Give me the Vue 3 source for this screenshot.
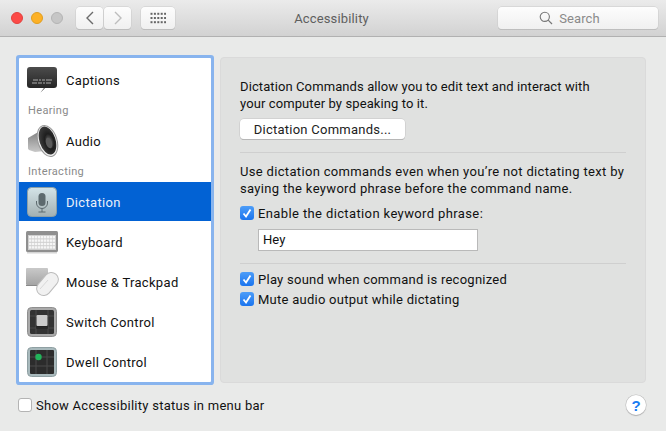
<template>
  <div class="window">
    <header class="titlebar">
      <div class="lights">
        <span class="light red"></span>
        <span class="light yellow"></span>
        <span class="light off"></span>
      </div>
      <div class="nav">
        <button class="tool nav-btn">
          <svg width="10" height="16" viewBox="0 0 10 16"><path d="M8 2 2 8l6 6" fill="none" stroke="#6b6b6b" stroke-width="1.4" /></svg>
        </button>
        <button class="tool nav-btn">
          <svg width="10" height="16" viewBox="0 0 10 16"><path d="m2 2 6 6-6 6" fill="none" stroke="#bdbdbd" stroke-width="1.4" /></svg>
        </button>
      </div>
      <button class="tool grid-btn">
        <svg width="16" height="12" viewBox="0 0 16 12">
          <g fill="#666">
            <rect v-for="d in gridDots" :key="d.k" :x="d.x" :y="d.y" width="2" height="2" />
          </g>
        </svg>
      </button>
      <div class="title">Accessibility</div>
      <div class="tool search">
        <svg width="14" height="14" viewBox="0 0 14 14"><circle cx="5.800" cy="5.800" r="4.600" fill="none" stroke="#777" stroke-width="1.100" /><path d="m9.200 9.200 3.800 3.800" stroke="#777" stroke-width="1.200" /></svg>
        <span>Search</span>
      </div>
    </header>

    <main class="content">
      <nav class="list">
        <div class="row">
          <svg class="icon" width="30" height="26" viewBox="0 0 30 26">
            <defs>
              <linearGradient id="bubble" x1="0" y1="0" x2="0" y2="1"><stop offset="0" stop-color="#4c4c4c" /><stop offset="1" stop-color="#1d1d1d" /></linearGradient>
            </defs>
            <path d="M3 0h24a3 3 0 0 1 3 3v15a3 3 0 0 1-3 3h-9l-4.500 4.500L17 21H3a3 3 0 0 1-3-3V3a3 3 0 0 1 3-3z" fill="url(#bubble)" />
            <path d="M6 13h5m1 0h2m1 0h3m1 0h6M5 16h5m1 0h4m1 0h2m1 0h5" stroke="#ccc" stroke-width="0.800" />
          </svg>
          <span>Captions</span>
        </div>
        <div class="group">Hearing</div>
        <div class="row">
          <svg class="icon" width="32" height="34" viewBox="0 0 32 34">
            <defs>
              <radialGradient id="cone" cx="0.600" cy="0.550" r="0.600"><stop offset="0" stop-color="#6f6f6f" /><stop offset="0.450" stop-color="#1e1e1e" /><stop offset="1" stop-color="#3d3d3d" /></radialGradient>
              <linearGradient id="shell" x1="0" y1="0" x2="0" y2="1"><stop offset="0" stop-color="#808080" /><stop offset="1" stop-color="#c8c8c8" /></linearGradient>
            </defs>
            <path d="M1 14 13 7l5 20-10 1-6-2a3 3 0 0 1-1-3z" fill="url(#shell)" />
            <ellipse cx="20.500" cy="17" rx="9.500" ry="16" transform="rotate(-18 20.500 17)" fill="#eee" stroke="#999" stroke-width="1" />
            <ellipse cx="20.500" cy="16.500" rx="8" ry="14.500" transform="rotate(-18 20.500 16.500)" fill="url(#cone)" />
            <ellipse cx="22" cy="19" rx="3" ry="5.500" transform="rotate(-18 22 19)" fill="#5a5a5a" />
          </svg>
          <span>Audio</span>
        </div>
        <div class="group">Interacting</div>
        <div class="row selected">
          <svg class="icon" width="30" height="30" viewBox="0 0 30 30">
            <defs>
              <linearGradient id="micbg" x1="0" y1="0" x2="0" y2="1"><stop offset="0" stop-color="#d4e4e8" /><stop offset="1" stop-color="#a3b0b2" /></linearGradient>
            </defs>
            <rect x="0.500" y="0.500" width="29" height="29" rx="4" fill="url(#micbg)" stroke="#8da0a6" />
            <rect x="11.500" y="6" width="7" height="13" rx="3.500" fill="#5d6a6e" />
            <path d="M9.500 14v2a5.500 5.500 0 0 0 11 0v-2M15 21.500V25m-3.500 0h7" fill="none" stroke="#5d6a6e" stroke-width="1" />
          </svg>
          <span>Dictation</span>
        </div>
        <div class="row">
          <svg class="icon wide" width="32" height="24" viewBox="0 0 32 24">
            <rect x="0" y="1" width="32" height="21" rx="1.500" fill="#8f8f8f" />
            <rect x="2" y="5" width="28" height="15" fill="#cfcfcf" />
            <g fill="#f6f6f6">
              <rect v-for="k in keyRects" :key="k.k" :x="k.x" :y="k.y" :width="k.w" height="2.400" />
            </g>
            <rect x="1" y="22" width="30" height="1.500" fill="#d4d4d4" />
          </svg>
          <span>Keyboard</span>
        </div>
        <div class="row">
          <svg class="icon wide" width="33" height="30" viewBox="0 0 33 30">
            <defs>
              <linearGradient id="pad" x1="0" y1="0" x2="0" y2="1"><stop offset="0" stop-color="#c9c9c9" /><stop offset="1" stop-color="#a4a4a4" /></linearGradient>
            </defs>
            <rect x="0" y="1" width="22" height="17" rx="1" fill="url(#pad)" />
            <path d="M0 18h22v1H0z" fill="#888" />
            <rect x="14.500" y="4" width="14" height="26" rx="7" transform="rotate(40 21.500 17)" fill="#f1f1f1" stroke="#bbb" stroke-width="1" />
            <path d="M14 22l8-9" stroke="#d8d8d8" stroke-width="1" />
          </svg>
          <span>Mouse &amp; Trackpad</span>
        </div>
        <div class="row">
          <svg class="icon" width="30" height="30" viewBox="0 0 30 30">
            <rect x="0.500" y="0.500" width="29" height="29" rx="4" fill="#a9a9a9" stroke="#8f8f8f" />
            <rect x="3" y="3" width="24" height="24" rx="1.500" fill="#333" />
            <path d="M3 9h24M3 21h24M9 3v24M21 3v24" stroke="#4b4b4b" stroke-width="1" />
            <rect x="9" y="10" width="12" height="12" rx="1" fill="#111" opacity="0.500" />
            <rect x="9.500" y="8" width="11" height="11" rx="1" fill="#cbcbcb" />
          </svg>
          <span>Switch Control</span>
        </div>
        <div class="row">
          <svg class="icon" width="30" height="30" viewBox="0 0 30 30">
            <rect x="0.500" y="0.500" width="29" height="29" rx="4" fill="#a8b9bc" stroke="#8fa0a3" />
            <rect x="3" y="3" width="24" height="24" rx="1" fill="#2c2c2c" />
            <path d="M3 10h24M3 19h24M9 3v24M20 3v24" stroke="#4a4a4a" stroke-width="1" />
            <circle cx="11.500" cy="10" r="3.200" fill="#22b45a" />
          </svg>
          <span>Dwell Control</span>
        </div>
      </nav>

      <section class="panel">
        <p class="text">Dictation Commands allow you to edit text and interact with<br />your computer by speaking to it.</p>
        <button class="push">Dictation Commands...</button>
        <hr class="sep" />
        <p class="text loose">Use dictation commands even when you’re not dictating text by<br />saying the keyword phrase before the command name.</p>
        <label class="check first">
          <span class="box on"><svg width="10" height="10" viewBox="0 0 10 10"><path d="M1.500 5.500 4 8.500 8.500 1.500" fill="none" stroke="#fff" stroke-width="1.800" /></svg></span>
          Enable the dictation keyword phrase:
        </label>
        <div class="field">Hey</div>
        <hr class="sep lower" />
        <label class="check">
          <span class="box on"><svg width="10" height="10" viewBox="0 0 10 10"><path d="M1.500 5.500 4 8.500 8.500 1.500" fill="none" stroke="#fff" stroke-width="1.800" /></svg></span>
          Play sound when command is recognized
        </label>
        <label class="check">
          <span class="box on"><svg width="10" height="10" viewBox="0 0 10 10"><path d="M1.500 5.500 4 8.500 8.500 1.500" fill="none" stroke="#fff" stroke-width="1.800" /></svg></span>
          Mute audio output while dictating
        </label>
      </section>
    </main>

    <footer class="footer">
      <label class="check">
        <span class="box"></span>
        Show Accessibility status in menu bar
      </label>
      <button class="help">?</button>
    </footer>
  </div>
</template>

<script setup>
const gridDots = [];
for (let r = 0; r < 3; r++) {
  for (let c = 0; c < 5; c++) {
    gridDots.push({ k: r + "-" + c, x: c * 3.4 + 0.5, y: r * 4.2 + 0.8 });
  }
}

const keyRects = [];
for (let r = 0; r < 4; r++) {
  for (let c = 0; c < 9; c++) {
    keyRects.push({ k: r + "-" + c, x: 3 + c * 2.95, y: 6 + r * 3.4, w: 2.4 });
  }
}
</script>

<style>
html,
body {
  margin: 0;
  background: #e9eae9;
}
</style>

<style scoped>
.window {
  width: 666px;
  height: 431px;
  overflow: hidden;
  background: #e9eae9;
  font-family: Roboto, "Liberation Sans", sans-serif;
  font-size: 13px;
  letter-spacing: 0.1px;
  color: #111;
}

.titlebar {
  height: 36px;
  display: flex;
  align-items: center;
  padding: 0 8px 0 11px;
  background: linear-gradient(#ebebeb, #d2d2d2);
  border-bottom: 1px solid #b1b1b1;
}

.lights {
  display: flex;
  gap: 8px;
  width: 65px;
}

.light {
  width: 12px;
  height: 12px;
  border-radius: 50%;
  box-sizing: border-box;
}

.red {
  background: #fc4a47;
  border: 1px solid #e2413e;
}

.yellow {
  background: #fdb126;
  border: 1px solid #e09e20;
}

.off {
  background: #c6c6c6;
  border: 1px solid #b4b4b4;
}

.tool {
  height: 22px;
  box-sizing: border-box;
  padding: 0;
  display: flex;
  align-items: center;
  justify-content: center;
  background: linear-gradient(#fdfdfd, #f0f0f0);
  border: 0;
  border-radius: 4px;
  box-shadow: 0 0 0 0.5px #c9c9c9, 0 1px 0 #b3b3b3;
}

.nav {
  display: flex;
  gap: 1px;
}

.nav-btn {
  width: 27px;
}

.grid-btn {
  width: 34px;
  margin-left: 10px;
}

.title {
  flex: 1;
  text-align: center;
  color: #5e5e5e;
  padding-right: 10px;
  letter-spacing: 0.15px;
}

.search {
  width: 160px;
  gap: 6px;
  color: #8a8a8a;
  padding-right: 17px;
}

.content {
  display: flex;
  gap: 9px;
  padding: 20px 20px 0 19px;
}

.list {
  width: 192px;
  height: 324px;
  margin-top: 1px;
  background: #fff;
  border-radius: 1px;
  box-shadow: 0 0 0 3px #88b4ee;
  flex: none;
}

.row {
  height: 40px;
  display: flex;
  align-items: center;
  position: relative;
  padding-left: 47px;
  letter-spacing: 0.32px;
}

.row:first-child {
  margin-top: 2px;
}

.icon {
  position: absolute;
  left: 8px;
  top: 50%;
  transform: translateY(-50%);
}

.icon.wide {
  left: 7px;
}

.selected {
  background: #0262d4;
  color: #e9f0fa;
  height: 39px;
  margin-bottom: 1px;
  padding-top: 1px;
  box-sizing: border-box;
}

.group {
  height: 21px;
  line-height: 21px;
  padding-left: 9px;
  font-size: 11px;
  letter-spacing: 0.35px;
  color: #8a8a8a;
}

.panel {
  flex: 1;
  height: 326px;
  box-sizing: border-box;
  padding: 20px 19px 0;
  background: #e0e1e0;
  border: 1px solid #dadada;
  border-radius: 4px;
}

.text {
  margin: 0;
  line-height: 17px;
  white-space: nowrap;
}

.text.loose {
  letter-spacing: 0.33px;
}

.push {
  display: block;
  width: 165px;
  height: 20px;
  margin-top: 7px;
  padding: 0;
  background: #fff;
  border: 0;
  border-radius: 4px;
  box-shadow: 0 0 0 0.5px #c4c4c4, 0 1px 0 #aaa;
  font: inherit;
  letter-spacing: 0.25px;
  color: #222;
}

.sep {
  margin: 13px 0 10px;
  border: 0;
  border-top: 1px solid #cfcfcf;
}

.sep.lower {
  margin: 12px 0 5px;
}

.check {
  display: flex;
  align-items: center;
  gap: 4px;
  height: 20px;
  letter-spacing: 0.26px;
}

.first {
  margin-top: 6px;
  letter-spacing: 0.38px;
}

.box {
  width: 14px;
  height: 14px;
  box-sizing: border-box;
  display: flex;
  align-items: center;
  justify-content: center;
  border-radius: 3px;
  background: #fff;
  border: 1px solid #b4b4b4;
}

.box.on {
  background: linear-gradient(#4d9df8, #1a74ee);
  border: 0;
}

.field {
  width: 220px;
  height: 22px;
  box-sizing: border-box;
  margin: 6px 0 0 18px;
  padding-left: 4px;
  line-height: 20px;
  background: #fff;
  border: 1px solid #b9b9b9;
}

.footer {
  display: flex;
  align-items: center;
  justify-content: space-between;
  padding: 12px 20px 0 18px;
}

.help {
  width: 20px;
  height: 20px;
  padding: 0;
  border: 0;
  border-radius: 50%;
  background: #fff;
  box-shadow: 0 0 0 0.5px #bbb, 0 1px 1px #aaa;
  color: #1b7cf2;
  font: bold 15px "Liberation Sans", sans-serif;
}
</style>
